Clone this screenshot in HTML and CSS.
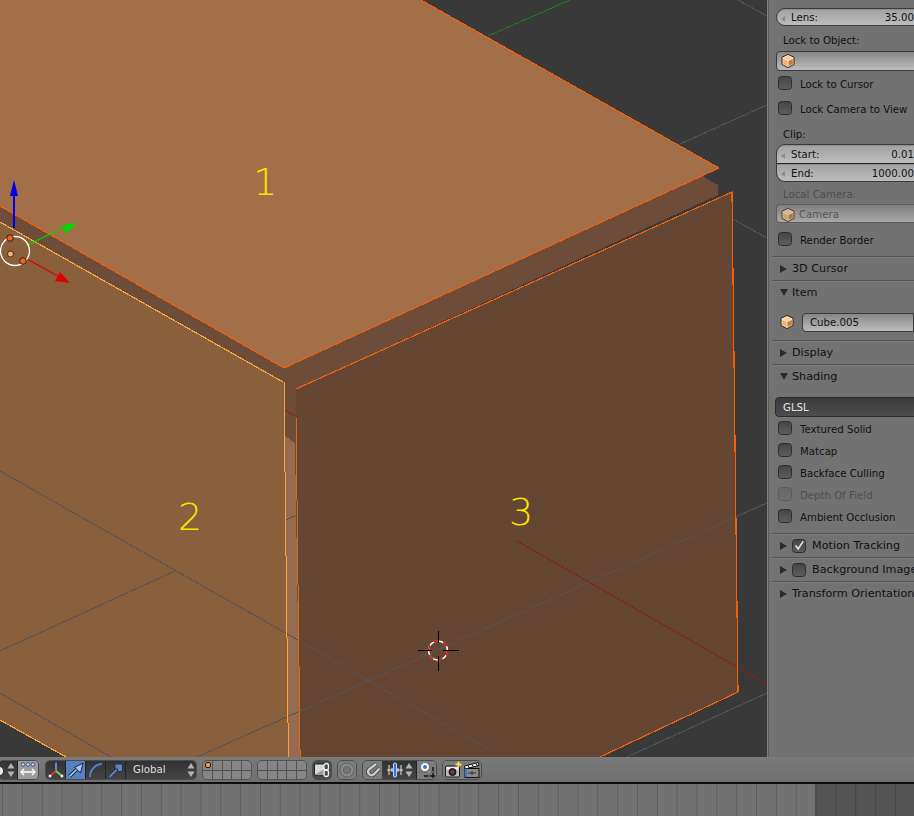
FILE: index.html
```html
<!DOCTYPE html>
<html lang="en">
<head>
<meta charset="utf-8">
<title>3D View</title>
<link rel="stylesheet" href="styles.css">
</head>
<body>
<svg class="defs" width="0" height="0" aria-hidden="true">
  <defs>
    <symbol id="cube" viewBox="0 0 14 14">
      <path d="M7 .4 13 3.200V10.400L7 13.600 1 10.400V3.200Z" fill="#f7e3c8" stroke="#33261a" stroke-width="1"/>
      <path d="M7 1.800 11.600 3.900 7 6.100 2.400 3.900Z" fill="#f9cf9c"/>
      <path d="M2.200 5 6.500 7V12L2.200 9.700Z" fill="#f2b064"/>
      <path d="M7.500 7 11.800 5V9.700L7.500 12Z" fill="#c97a2c"/>
    </symbol>
    <symbol id="updown" viewBox="0 0 8 16">
      <path d="M4 1 7.500 6.500H.5Z" fill="#b4b4b4"/>
      <path d="M4 15 .5 9.500H7.500Z" fill="#b4b4b4"/>
    </symbol>
  </defs>
</svg>
<div class="app">
  <div class="main">
    <div class="viewport">
      <svg class="scene" width="767" height="757" viewBox="0 0 767 757">
        <g class="crisp">
          <path class="f-band" d="M0 200 284 362 700 172 705 178 718 185 718 195 296 389 300 757H0Z"/>
          <path class="f-left" d="M0 222 284 382 288 757H66L0 720Z"/>
          <path class="f-bg" d="M0 720 66 757H0Z"/>
          <path class="f-right" d="M296 389 732 192 738 692 600 757H300Z"/>
          <path class="f-strip" d="M285 436 295 443 300 757H288Z"/>
          <path class="f-top" d="M0 0H421L719 168 284 368 0 206Z"/>
        </g>
        <g class="crisp grid">
          <path d="M0 471 298 640 490 750"/>
          <path d="M0 651 175 571"/>
          <path d="M0 693 111 757"/>
          <path d="M197 757 767 503"/>
          <path d="M286 520 297 515"/>
          <path d="M680 144 767 105"/>
          <path d="M738 0 767 16"/>
          <path d="M733 219 767 238"/>
          <path d="M627 757 767 693"/>
        </g>
        <path class="crisp axis-g" d="M488 36 570 0"/>
        <path class="crisp axis-r" d="M517 541 767 684"/>
        <path class="crisp axis-r" d="M285 410 295 416"/>
        <g class="crisp edge">
          <path d="M421 0 719 168 284 368 0 206"/>
          <path d="M296 389 732 192 738 692 600 757"/>
          <path d="M296.500 418V500M297.500 500V585M298.500 585V666M299.500 666V750M300.500 750V757"/>
        </g>
        <g class="crisp edge-lt">
          <path d="M0 222 283 382M284.500 382V472M285.500 472V556M286.500 556V638M287.500 638V723M288.500 723V757"/>
          <path d="M0 720 66 757"/>
        </g>
        <text class="num" x="265" y="195" text-anchor="middle">1</text>
        <text class="num" x="190" y="530" text-anchor="middle">2</text>
        <text class="num" x="521" y="525" text-anchor="middle">3</text>
        <g class="gizmo">
          <path d="M14 228V192" class="g-b"/>
          <path d="M14 180 18 196H10Z" fill="#0000e8"/>
          <path d="M26 246 64 227" class="g-g"/>
          <path d="M77 223 62 225 66 234Z" fill="#00d800"/>
          <path d="M27 259 58 276" class="g-r"/>
          <path d="M70 283 55 281 60 272Z" fill="#e00000"/>
          <circle cx="15" cy="251" r="14.500" class="g-c"/>
          <circle cx="10.500" cy="254" r="3" fill="#f4b27c" stroke="#4a2a10"/>
          <circle cx="10" cy="238" r="3.300" fill="#e8641a" stroke="#3a2010"/>
          <circle cx="23" cy="261" r="3.300" fill="#e8641a" stroke="#3a2010"/>
        </g>
        <g class="cursor">
          <circle cx="438" cy="650.500" r="9.500" class="cur-w"/>
          <circle cx="438" cy="650.500" r="9.500" class="cur-r"/>
          <path d="M438 631V643M438 656V671M418 650.500H432M443 650.500H459" class="crisp cur-k"/>
        </g>
      </svg>
    </div>
    <aside class="sidebar">
      <div class="field num-field lens"><span class="tri-l"></span><span>Lens:</span><span class="val">35.00</span></div>
      <div class="label mt4">Lock to Object:</div>
      <div class="field text-field obj mt1"><svg class="ico14"><use href="#cube"/></svg></div>
      <div class="check-row tall"><span class="box"></span>Lock to Cursor</div>
      <div class="check-row tall"><span class="box"></span>Lock Camera to View</div>
      <div class="label mt3">Clip:</div>
      <div class="field num-field first"><span class="tri-l"></span><span>Start:</span><span class="val">0.01</span></div>
      <div class="field num-field last"><span class="tri-l"></span><span>End:</span><span class="val">1000.00</span></div>
      <div class="label mt2 off">Local Camera:</div>
      <div class="field text-field off dim"><svg class="ico14"><use href="#cube"/></svg><span>Camera</span></div>
      <div class="check-row tall mt4"><span class="box"></span>Render Border</div>
      <section class="panel p-first"><h3 class="head"><span class="tri-r"></span>3D Cursor</h3></section>
      <section class="panel">
        <h3 class="head"><span class="tri-d"></span>Item</h3>
        <div class="item-row"><svg class="ico14"><use href="#cube"/></svg><div class="field text-field name">Cube.005</div></div>
      </section>
      <section class="panel"><h3 class="head"><span class="tri-r"></span>Display</h3></section>
      <section class="panel shading">
        <h3 class="head"><span class="tri-d"></span>Shading</h3>
        <div class="field dark-field">GLSL</div>
        <div class="check-row"><span class="box"></span>Textured Solid</div>
        <div class="check-row"><span class="box"></span>Matcap</div>
        <div class="check-row"><span class="box"></span>Backface Culling</div>
        <div class="check-row off"><span class="box"></span>Depth Of Field</div>
        <div class="check-row"><span class="box"></span>Ambient Occlusion</div>
      </section>
      <section class="panel"><h3 class="head"><span class="tri-r"></span><span class="box small checked"><svg viewBox="0 0 14 14"><path d="M3 6.500 6 10.500 12 1.500" fill="none" stroke="#e8e8e8" stroke-width="1.800"/></svg></span>Motion Tracking</h3></section>
      <section class="panel"><h3 class="head"><span class="tri-r"></span><span class="box small"></span>Background Images</h3></section>
      <section class="panel"><h3 class="head"><span class="tri-r"></span>Transform Orientations</h3></section>
    </aside>
  </div>
  <div class="toolbar">
    <div class="group cut">
      <span class="btn dark w19 ballbtn"><i class="ball"></i><svg class="arrows"><use href="#updown"/></svg></span>
      <span class="btn light w20">
        <svg width="18" height="18" viewBox="0 0 18 18"><g fill="#dfe7f2" stroke="#2d4f86"><circle cx="4" cy="3.500" r="1.700"/><circle cx="9" cy="3.500" r="1.700"/><circle cx="14" cy="3.500" r="1.700"/></g><path d="M2 11H16M5 8 2 11 5 14M13 8 16 11 13 14" fill="none" stroke="#fff" stroke-width="1.400"/></svg>
      </span>
    </div>
    <div class="group g-main">
      <span class="btn dark w20">
        <svg width="18" height="18" viewBox="0 0 18 18"><path d="M9 10V1.500" stroke="#5d87d8" stroke-width="2"/><path d="M9 10 3 15" stroke="#d83838" stroke-width="2"/><path d="M9 10 15 15" stroke="#7ccf3c" stroke-width="2"/><circle cx="3" cy="15" r="1.500" fill="#e8e8e8"/><circle cx="15" cy="15" r="1.500" fill="#e8e8e8"/></svg>
      </span>
      <span class="btn active w20">
        <svg width="18" height="18" viewBox="0 0 18 18"><path d="M2.500 15.500 9.500 8.500" stroke="#123" stroke-width="3.400"/><path d="M2.500 15.500 9.500 8.500" stroke="#bcd4f4" stroke-width="1.600"/><path d="M16 2 13.500 12 10.500 9 7.500 6.500Z" fill="#a9c7f0" stroke="#12233f"/></svg>
      </span>
      <span class="btn dark w20">
        <svg width="18" height="18" viewBox="0 0 18 18"><path d="M3 16C3 9 8 3.500 15 3" fill="none" stroke="#233a5e" stroke-width="3.400"/><path d="M3 16C3 9 8 3.500 15 3" fill="none" stroke="#5f82b8" stroke-width="2"/></svg>
      </span>
      <span class="btn dark w20">
        <svg width="18" height="18" viewBox="0 0 18 18"><path d="M2.500 16 10 8.500" stroke="#1d3153" stroke-width="3.600"/><path d="M2.500 16 10 8.500" stroke="#5f82b8" stroke-width="2"/><path d="M8 3H15.500V10.500H10.500V8H8Z" fill="#5f82b8" stroke="#1d3153"/></svg>
      </span>
      <span class="btn dark select"><span>Global</span><svg class="arrows"><use href="#updown"/></svg></span>
    </div>
    <div class="layers">
      <span class="cell"><i class="dot"></i></span><span class="cell"></span><span class="cell"></span><span class="cell"></span><span class="cell"></span>
      <span class="cell"></span><span class="cell"></span><span class="cell"></span><span class="cell"></span><span class="cell"></span>
    </div>
    <div class="layers">
      <span class="cell"></span><span class="cell"></span><span class="cell"></span><span class="cell"></span><span class="cell"></span>
      <span class="cell"></span><span class="cell"></span><span class="cell"></span><span class="cell"></span><span class="cell"></span>
    </div>
    <div class="group"><span class="btn lock w18">
      <svg width="18" height="18" viewBox="0 0 18 18"><rect x="1.500" y="3" width="10" height="11" fill="#d8d8d8" stroke="#222"/><path d="M1.500 14H11.500V8Z" fill="#9a9a9a"/><rect x="11" y="2.500" width="4.500" height="6.500" rx="2.200" fill="none" stroke="#eee" stroke-width="1.300"/><rect x="11" y="9" width="4.500" height="6.500" rx="2.200" fill="none" stroke="#eee" stroke-width="1.300"/></svg>
    </span></div>
    <div class="group"><span class="btn gray w18">
      <svg width="18" height="18" viewBox="0 0 18 18"><circle cx="9" cy="9" r="7" fill="#8a8a8a" stroke="#666" stroke-width="1.200"/><circle cx="9" cy="9" r="3.500" fill="#777" stroke="#666" stroke-width="1.200"/></svg>
    </span></div>
    <div class="group">
      <span class="btn gray w19">
        <svg width="18" height="18" viewBox="0 0 18 18"><path d="M12 3 5 8.500C2.500 11 6 16 9.500 13.500L15.500 7.500" fill="none" stroke="#444" stroke-width="4"/><path d="M12 3 5 8.500C2.500 11 6 16 9.500 13.500L15.500 7.500" fill="none" stroke="#cacaca" stroke-width="2.400"/></svg>
      </span>
      <span class="btn dark w34">
        <svg width="18" height="18" viewBox="0 0 18 18"><path d="M3 4V14M15 4V14M6 7V11M12 7V11" stroke="#e8e8e8"/><path d="M1 9H17" stroke="#e8e8e8"/><rect x="7.500" y="2" width="3" height="14" rx="1" fill="#2f6fe0" stroke="#bcd2f8"/></svg>
        <svg class="arrows"><use href="#updown"/></svg>
      </span>
      <span class="btn gray w19">
        <svg width="18" height="18" viewBox="0 0 18 18"><path d="M11 1V17M15 6V17M1 11H17M6 15H17" stroke="#111" stroke-width="1.400"/><path d="M11 1V17M1 11H17" stroke="#eee" stroke-width=".7"/><circle cx="7" cy="6" r="4.500" fill="#f4f4f4" stroke="#777"/><circle cx="7" cy="6" r="2" fill="#3a78d8"/></svg>
      </span>
    </div>
    <div class="group">
      <span class="btn gray w19">
        <svg width="18" height="18" viewBox="0 0 18 18"><rect x="1.500" y="5" width="14" height="11" rx="1" fill="#bcbcbc" stroke="#1a1a1a"/><rect x="2.500" y="6" width="12" height="2.500" fill="#eee"/><circle cx="8.500" cy="11" r="3.500" fill="#333" stroke="#111"/><circle cx="8.500" cy="11" r="1.600" fill="#b03030"/><path d="M14.500 .5V6.500M11.500 3.500H17.500" stroke="#f7d85a" stroke-width="2"/></svg>
      </span>
      <span class="btn gray w19">
        <svg width="18" height="18" viewBox="0 0 18 18"><rect x="2" y="7.500" width="14" height="9" fill="#8a8a8a" stroke="#111"/><path d="M5 12H13M9 10V14" stroke="#333"/><path d="M1.500 5 15.500 1.500 16 4.500 2 8Z" fill="#f0f0f0" stroke="#111"/><path d="M5 4.500 6.500 7M9 3.500 10.500 6M13 2.500 14.500 5" stroke="#111"/><rect x="2" y="8" width="2" height="8" fill="#3a78d8"/></svg>
      </span>
    </div>
  </div>
  <div class="timeline"><div class="range"></div></div>
</div>
</body>
</html>
```

FILE: styles.css
```css
* { box-sizing: border-box; }
html, body { margin: 0; padding: 0; background: #727272; }
body { font: 10.2px/1 "DejaVu Sans", sans-serif; color: #111; }
.defs { position: absolute; }
.app { width: 914px; height: 816px; overflow: hidden; display: flex; flex-direction: column; }
.main { display: flex; height: 757px; flex: none; }
.viewport { width: 767px; flex: none; background: #393939; }
.scene { display: block; }

/* 3D scene */
.crisp { shape-rendering: crispEdges; }
.f-top { fill: #a26f48; }
.f-band { fill: #6d4d3a; }
.f-left { fill: #8a5f3b; }
.f-right { fill: #654633; }
.f-strip { fill: #966b50; }
.f-bg { fill: #393939; }
.grid path { fill: none; stroke: #555353; stroke-width: 1; }
.axis-g { fill: none; stroke: #1f7a1f; }
.axis-r { fill: none; stroke: #8a1f1a; }
.edge path { fill: none; stroke: #f0600c; stroke-width: 1.200; }
.edge-lt path { fill: none; stroke: #f8a33c; stroke-width: 1.200; }
.num { font-family: "DejaVu Sans", sans-serif; font-size: 38px; font-weight: 200; fill: #fde400; }
.g-b { stroke: #0000e8; stroke-width: 1.500; shape-rendering: crispEdges; }
.g-g { stroke: #00d800; stroke-width: 1.200; }
.g-r { stroke: #e00000; stroke-width: 1.200; }
.g-c { fill: none; stroke: #fff; stroke-width: 1.300; }
.cur-w { fill: none; stroke: #fff; stroke-width: 1.500; }
.cur-r { fill: none; stroke: #e00000; stroke-width: 1.500; stroke-dasharray: 5 5; }
.cur-k { fill: none; stroke: #000; stroke-width: 1; }

/* sidebar */
.sidebar { width: 147px; flex: none; overflow: hidden; white-space: nowrap; background: #727272; border-left: 1px solid #7f7f7f; box-shadow: inset 1px 0 #5c5c5c; padding-left: 8px; }
.mt1 { margin-top: 1px; }
.mt2 { margin-top: 2px; }
.mt3 { margin-top: 3px; }
.mt4 { margin-top: 4px; }
.label { height: 20px; line-height: 22px; padding-left: 7px; }
.off { color: #4e4e4e; }
.field { width: 150px; height: 19px; display: flex; align-items: center; padding-top: 3px; border: 1px solid #3a3a3a; }
.num-field { background: linear-gradient(#a2a2a2, #bcbcbc); border-radius: 9px 0 0 9px; padding: 3px 11px 0 4px; box-shadow: inset 0 1px #8f8f8f; }
.lens { height: 18px; margin-top: 8px; }
.num-field.first { border-radius: 9px 0 0 0; border-bottom: 0; }
.num-field.last { border-radius: 0 0 0 9px; border-top: 1px solid #222; }
.tri-l { width: 0; height: 0; border: 3.500px solid transparent; border-left: 0; border-right: 4px solid #8a8a8a; margin-right: 6px; }
.val { margin-left: auto; }
.text-field { background: linear-gradient(#868686, #bdbdbd); border-radius: 4px 0 0 4px; padding-left: 4px; }
.text-field.obj { height: 20px; padding-top: 0; }
.text-field span { margin-left: 4px; }
.text-field.dim { opacity: .72; border-color: #555; }
.ico14 { width: 14px; height: 14px; flex: none; }
.check-row { height: 22px; display: flex; align-items: flex-start; line-height: 14px; padding: 5px 0 0 2px; }
.check-row.tall { height: 25px; padding-top: 7px; }
.box { width: 14px; height: 14px; flex: none; margin: -2px 8px 0 0; border-radius: 3.500px; border: 1px solid #2e2e2e; background: linear-gradient(#464646, #5c5c5c); }
.check-row.off .box { border-color: #5a5a5a; background: linear-gradient(#686868, #6e6e6e); }
.panel { margin-left: -4px; border-top: 1px solid #545454; box-shadow: inset 0 1px #7d7d7d; }
.p-first { margin-top: 4px; }
.shading { padding-bottom: 5px; }
.head { margin: 0; height: 23px; display: flex; align-items: center; font: inherit; font-size: 11.200px; padding-left: 8px; }
.tri-r { width: 0; height: 0; border: 4px solid transparent; border-right: 0; border-left: 7px solid #2b2b2b; margin-right: 5px; flex: none; }
.tri-d { width: 0; height: 0; border: 4px solid transparent; border-bottom: 0; border-top: 7px solid #2b2b2b; margin-right: 4px; flex: none; }
.box.small { margin: 0 6px 0 0; }
.box.checked { padding: 0; display: block; }
.box.checked svg { display: block; width: 12px; height: 12px; }
.item-row { display: flex; align-items: center; height: 36px; padding: 0 0 0 8px; }
.name { margin-left: 8px; padding-left: 7px; }
.dark-field { margin: 9px 0 1px 3px; height: 20px; padding-left: 7px; color: #e6e6e6; background: linear-gradient(#3a3a3a, #4e4e4e); border-radius: 4px 0 0 4px; border-color: #2a2a2a; }
.panel .check-row { padding-left: 6px; }

/* toolbar */
.toolbar { height: 27px; flex: none; display: flex; align-items: flex-start; padding-top: 3px; background: linear-gradient(#7a7a7a, #6f6f6f); border-bottom: 2px solid #0c0c0c; }
.group { display: flex; height: 20px; margin-right: 5px; border: 1px solid #4c4c4c; border-radius: 5px; overflow: hidden; }
.group.cut { margin-left: -2px; margin-right: 6px; }
.btn { height: 100%; display: flex; align-items: center; justify-content: center; position: relative; flex: none; }
.w18 { width: 18px; }
.w19 { width: 19px; }
.w20 { width: 20px; }
.w34 { width: 35px; gap: 1px; }
.dark { background: linear-gradient(#323232, #444); border-right: 1px solid #222; }
.light { background: #9c9c9c; }
.gray { background: #7c7c7c; }
.lock { background: #4a4a4a; }
.active { background: #5680c2; border-right: 1px solid #222; }
.select { width: 72px; border-right: 0; color: #dcdcdc; justify-content: space-between; padding: 1px 3px 0 7px; }
.select svg { margin-top: -1px; }
.g-main { width: 152px; }
.arrows { width: 8px; height: 16px; }
.ballbtn { justify-content: flex-end; padding-right: 2px; }
.ball { position: absolute; left: -4px; top: 6px; width: 8px; height: 8px; border-radius: 50%; background: #e8e8e8; }
.layers { width: 50px; height: 20px; display: grid; grid-template-columns: repeat(5, 1fr); grid-template-rows: 1fr 1fr; gap: 1px; background: #525252; border: 1px solid #525252; border-radius: 5px; overflow: hidden; margin-right: 5px; }
.cell { background: #868686; position: relative; }
.dot { position: absolute; left: 2px; top: 1px; width: 6px; height: 6px; background: #f0943a; border: 1px solid #222; border-radius: 2px; }

/* timeline */
.timeline { flex: 1; display: flex; justify-content: flex-end; background-color: #727272; background-image: linear-gradient(90deg, transparent 18.850px, #5e5e5e 18.850px); background-size: 19.850px 100%; background-position-x: 3px; }
.range { width: 99px; background: rgba(0, 0, 0, .26); }
```
